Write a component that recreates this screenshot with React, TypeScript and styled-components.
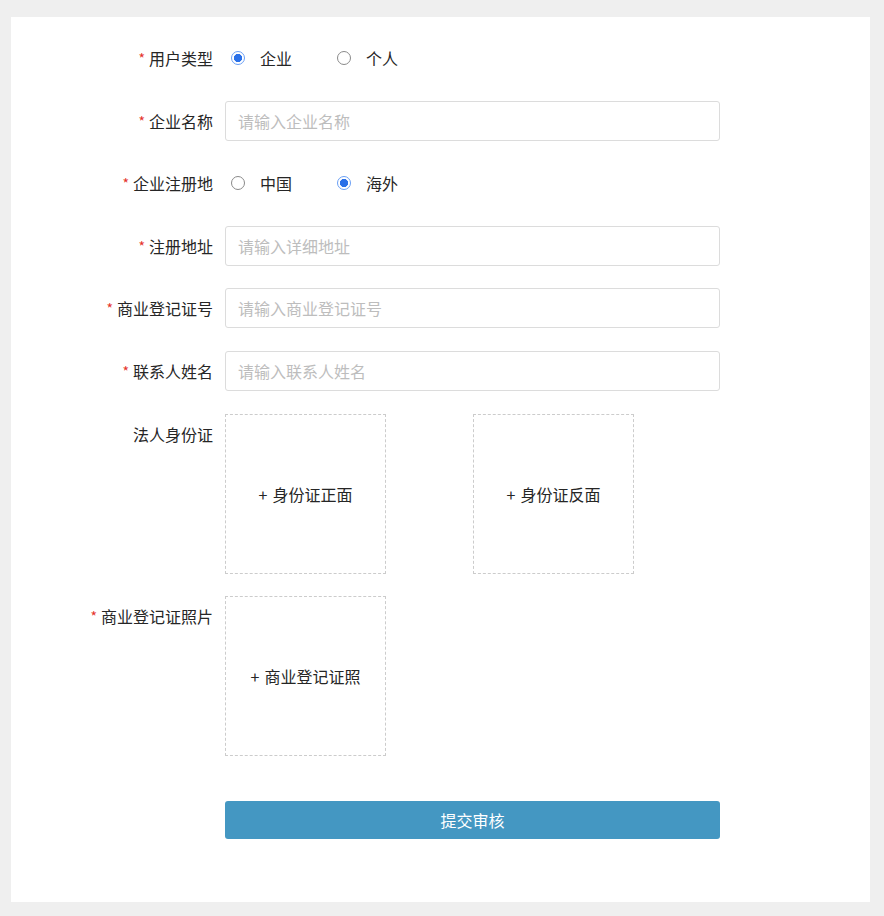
import React, { useState } from "react";
import styled, { createGlobalStyle, css } from "styled-components";

const GlobalStyle = createGlobalStyle`
  html, body {
    margin: 0;
    padding: 0;
    background: #efefef;
  }
  body {
    font-family: "Noto Sans CJK SC", "Noto Sans", sans-serif;
    color: #262626;
  }
`;

const Page = styled.div`
  padding: 17px 14px 14px 11px;
`;

const Card = styled.div`
  background: #ffffff;
  height: 885px;
  box-sizing: border-box;
  padding: 21px 0 0 72px;
`;

const Row = styled.div`
  display: flex;
  align-items: flex-start;
  margin-bottom: 22.6px;
`;

const Label = styled.div`
  width: 142px;
  height: 40px;
  padding-right: 12px;
  box-sizing: border-box;
  display: flex;
  align-items: center;
  justify-content: flex-end;
  font-size: 16px;
  line-height: 1;
  color: #262626;
  white-space: nowrap;
`;

const Star = styled.span`
  color: #e5332b;
  font-size: 14px;
  line-height: 1;
  margin-right: 4px;
`;

const Field = styled.div`
  display: flex;
  align-items: center;
  height: 40px;
`;

const Option = styled.label`
  display: flex;
  align-items: center;
  width: 106px;
  padding-left: 6px;
  box-sizing: border-box;
  font-size: 16px;
  color: #262626;
  cursor: pointer;
`;

const RadioDot = styled.span<{ $checked: boolean }>`
  width: 14px;
  height: 14px;
  border-radius: 50%;
  box-sizing: border-box;
  margin-right: 15px;
  flex-shrink: 0;
  border: 1px solid #8a8a8a;
  background: #ffffff;
  ${(p) =>
    p.$checked &&
    css`
      border-color: #6a9ff5;
      background: radial-gradient(circle, #2a70e8 0 3.8px, #ffffff 4.4px);
    `}
`;

const TextInput = styled.input`
  width: 495px;
  height: 40px;
  box-sizing: border-box;
  border: 1px solid #dcdcdc;
  border-radius: 3px;
  padding: 0 12px;
  font-family: inherit;
  font-size: 16px;
  color: #262626;
  outline: none;
  &::placeholder {
    color: #bdbdbd;
  }
`;

const Uploads = styled.div`
  display: flex;
  gap: 87px;
`;

const UploadBox = styled.div`
  width: 161px;
  height: 160px;
  box-sizing: border-box;
  border: 1px dashed #cccccc;
  display: flex;
  align-items: center;
  justify-content: center;
  font-size: 16px;
  color: #262626;
  cursor: pointer;
`;

const Plus = styled.span`
  margin-right: 5px;
`;

const ButtonRow = styled.div`
  display: flex;
  padding-left: 142px;
  margin-top: 45px;
`;

const Submit = styled.button`
  width: 495px;
  height: 38px;
  border: none;
  border-radius: 3px;
  background: #4497c2;
  color: #ffffff;
  font-family: inherit;
  font-size: 16px;
  cursor: pointer;
`;

interface RadioGroupProps {
  options: string[];
  value: string;
  onChange: (v: string) => void;
}

const RadioGroup: React.FC<RadioGroupProps> = ({ options, value, onChange }) => (
  <Field>
    {options.map((o) => (
      <Option key={o} onClick={() => onChange(o)}>
        <RadioDot $checked={value === o} />
        {o}
      </Option>
    ))}
  </Field>
);

const FieldLabel: React.FC<{ required?: boolean; children: React.ReactNode }> = ({
  required,
  children,
}) => (
  <Label>
    {required && <Star>*</Star>}
    {children}
  </Label>
);

const Upload: React.FC<{ text: string }> = ({ text }) => (
  <UploadBox>
    <Plus>+</Plus>
    {text}
  </UploadBox>
);

export default function App() {
  const [userType, setUserType] = useState("企业");
  const [region, setRegion] = useState("海外");

  return (
    <Page>
      <GlobalStyle />
      <Card>
        <Row>
          <FieldLabel required>用户类型</FieldLabel>
          <RadioGroup options={["企业", "个人"]} value={userType} onChange={setUserType} />
        </Row>
        <Row>
          <FieldLabel required>企业名称</FieldLabel>
          <TextInput placeholder="请输入企业名称" />
        </Row>
        <Row>
          <FieldLabel required>企业注册地</FieldLabel>
          <RadioGroup options={["中国", "海外"]} value={region} onChange={setRegion} />
        </Row>
        <Row>
          <FieldLabel required>注册地址</FieldLabel>
          <TextInput placeholder="请输入详细地址" />
        </Row>
        <Row>
          <FieldLabel required>商业登记证号</FieldLabel>
          <TextInput placeholder="请输入商业登记证号" />
        </Row>
        <Row>
          <FieldLabel required>联系人姓名</FieldLabel>
          <TextInput placeholder="请输入联系人姓名" />
        </Row>
        <Row>
          <FieldLabel>法人身份证</FieldLabel>
          <Uploads>
            <Upload text="身份证正面" />
            <Upload text="身份证反面" />
          </Uploads>
        </Row>
        <Row>
          <FieldLabel required>商业登记证照片</FieldLabel>
          <Uploads>
            <Upload text="商业登记证照" />
          </Uploads>
        </Row>
        <ButtonRow>
          <Submit>提交审核</Submit>
        </ButtonRow>
      </Card>
    </Page>
  );
}
